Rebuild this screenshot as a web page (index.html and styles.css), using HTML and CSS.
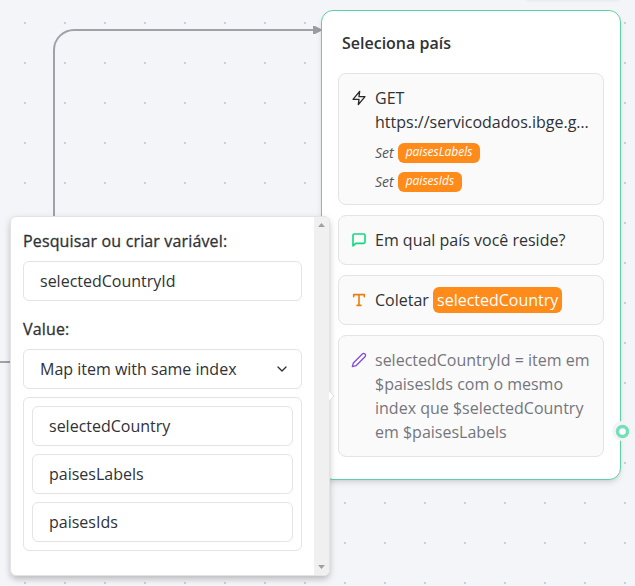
FILE: index.html
```html
<!DOCTYPE html>
<html lang="pt-BR">
<head>
<meta charset="utf-8">
<title>Seleciona país</title>
<link rel="stylesheet" href="styles.css">
</head>
<body>
<main class="canvas">
  <svg class="edges" width="635" height="586" viewBox="0 0 635 586">
    <path class="edge" d="M0 362H20M54 230V50a20 20 0 0 1 20-20H315"/>
    <path class="arrow" d="M313 26h2l6 3v2l-6 3h-2z"/>
  </svg>
  <div class="toolbar-shadow"></div>

  <section class="group">
    <h2 class="group-title">Seleciona país</h2>
    <article class="block block-request">
      <svg class="icon" viewBox="0 0 24 24"><polygon points="13 2 3 14 12 14 11 22 21 10 12 10 13 2"/></svg>
      <div class="block-body">
        <p class="request">GET<br>https://servicodados.ibge.g…</p>
        <p class="set"><em>Set</em><span class="tag">paisesLabels</span></p>
        <p class="set"><em>Set</em><span class="tag">paisesIds</span></p>
      </div>
    </article>
    <article class="block">
      <svg class="icon icon-bubble" viewBox="0 0 24 24"><path d="M21 15a2 2 0 0 1-2 2H7l-4 4V5a2 2 0 0 1 2-2h14a2 2 0 0 1 2 2z"/></svg>
      <p class="block-body">Em qual país você reside?</p>
    </article>
    <article class="block">
      <svg class="icon icon-input" viewBox="0 0 24 24"><path d="M4 7V4h16v3M9 20h6M12 4v16"/></svg>
      <p class="block-body">Coletar <span class="variable">selectedCountry</span></p>
    </article>
    <article class="block">
      <svg class="icon icon-logic" viewBox="0 0 24 24"><path d="M17 3a2.828 2.828 0 1 1 4 4L7.500 20.500 2 22l1.500-5.500L17 3z"/></svg>
      <p class="block-body muted">selectedCountryId = item em $paisesIds com o mesmo index que $selectedCountry em $paisesLabels</p>
    </article>
    <svg class="endpoint" viewBox="0 0 20 20"><circle class="halo" cx="10" cy="10" r="10"/><circle class="ring" cx="10.500" cy="10.500" r="5"/></svg>
  </section>

  <aside class="popover">
    <form class="form">
      <div class="label">Pesquisar ou criar variável:</div>
      <div class="field">selectedCountryId</div>
      <div class="label label-value">Value:</div>
      <div class="field select">Map item with same index
        <svg class="chevron" viewBox="0 0 24 24"><polyline points="6 9 12 15 18 9"/></svg>
      </div>
      <div class="list">
        <div class="field">selectedCountry</div>
        <div class="field">paisesLabels</div>
        <div class="field">paisesIds</div>
      </div>
    </form>
    <div class="scrollbar">
      <svg width="7" height="4" viewBox="0 0 7 4"><path d="M0 4L3.500 0 7 4z"/></svg>
      <svg width="7" height="4" viewBox="0 0 7 4"><path d="M0 0L3.500 4 7 0z"/></svg>
    </div>
    <svg class="pointer" viewBox="0 0 6 12"><path d="M0 .5L5 6 0 11.500"/></svg>
  </aside>
</main>
</body>
</html>
```
FILE: styles.css
```css
* {
  box-sizing: border-box;
}

body {
  margin: 0;
  color: #303235;
  font: 16px/24px "Open Sans", "Noto Sans", sans-serif;
}

p,
h2 {
  margin: 0;
}

.canvas {
  position: relative;
  width: 635px;
  height: 586px;
  overflow: hidden;
  background: #f4f5f8 conic-gradient(from 90deg at 38px 38px, #c6d0e1 25%, transparent 0) -14px -16px / 40px 40px;
}

.edges {
  position: absolute;
  inset: 0;
}

.edge {
  fill: none;
  stroke: #a0a2a8;
  stroke-width: 2;
}

.arrow {
  fill: #9a9ca1;
}

.toolbar-shadow {
  position: absolute;
  top: -10px;
  left: 524px;
  width: 98px;
  height: 10px;
  border-radius: 6px;
  box-shadow: 0 1px 3px rgb(0 0 0 / 6%);
}

.group {
  position: absolute;
  top: 10px;
  left: 321px;
  display: flex;
  flex-direction: column;
  gap: 10px;
  width: 300px;
  height: 470px;
  padding: 20px 16px;
  border: 1px solid #5fcfa5;
  border-radius: 12px;
  background: #fff;
  box-shadow: 0 4px 6px -1px rgb(0 0 0 / 10%), 0 2px 4px -2px rgb(0 0 0 / 10%);
}

.group-title {
  margin-bottom: 8px;
  padding-left: 4px;
  font-size: 16px;
  font-weight: 600;
  line-height: 24px;
}

.block {
  display: flex;
  gap: 8px;
  width: 266px;
  padding: 12px;
  border: 1px solid #e4e4e7;
  border-radius: 8px;
  background: #fafafa;
}

.block-request {
  height: 132px;
}

.icon {
  flex: none;
  width: 16px;
  height: 16px;
  margin-top: 4px;
  fill: none;
  stroke: #27282b;
  stroke-width: 2;
  stroke-linecap: round;
  stroke-linejoin: round;
}

.icon-bubble {
  stroke: #14d880;
  stroke-width: 2.4;
}

.icon-input {
  stroke: #e87d12;
  stroke-width: 2.4;
}

.icon-logic {
  stroke: #8250d8;
}

.block-body {
  flex: 1;
  min-width: 0;
}

.request {
  white-space: nowrap;
}

.muted {
  color: #75767d;
}

.set {
  display: flex;
  align-items: center;
  gap: 4px;
  height: 20px;
  margin-top: 9px;
  color: #55565c;
  font-size: 14px;
  line-height: 20px;
}

.tag {
  height: 20px;
  padding: 0 8px;
  border-radius: 6px;
  background: #ff8b1a;
  color: #fff;
  font-size: 12px;
  font-style: italic;
  line-height: 17px;
}

.variable {
  padding: 2px 4px;
  border-radius: 6px;
  background: #ff8b1a;
  color: #fff;
}

.endpoint {
  position: absolute;
  top: 410px;
  right: -12px;
  width: 20px;
  height: 20px;
}

.halo {
  fill: #f3f4f5;
}

.ring {
  fill: #fff;
  stroke: #74dfb8;
  stroke-width: 3.5;
}

.popover {
  position: absolute;
  top: 216px;
  left: 10px;
  display: flex;
  width: 320px;
  height: 360px;
  border: 1px solid #e2e3e5;
  border-radius: 6px;
  background: #fff;
  box-shadow: 0 4px 6px -1px rgb(0 0 0 / 18%), 0 2px 10px rgb(0 0 0 / 9%);
}

.form {
  flex: 1;
  padding: 12px;
}

.label {
  margin-bottom: 8px;
  letter-spacing: 0.15px;
  -webkit-text-stroke: 0.3px currentColor;
}

.label-value {
  margin-top: 16px;
}

.field {
  height: 40px;
  padding: 7px 16px;
  border: 1px solid #e4e4e7;
  border-radius: 6px;
}

.select {
  display: flex;
  align-items: center;
  justify-content: space-between;
  padding-right: 11px;
}

.chevron {
  width: 16px;
  height: 16px;
  fill: none;
  stroke: #303235;
  stroke-width: 2;
  stroke-linecap: round;
  stroke-linejoin: round;
}

.list {
  display: flex;
  flex-direction: column;
  gap: 8px;
  margin-top: 8px;
  padding: 8px;
  border: 1px solid #e4e4e7;
  border-radius: 6px;
}

.scrollbar {
  display: flex;
  flex-direction: column;
  align-items: center;
  justify-content: space-between;
  width: 15px;
  padding: 6px 0;
  border-radius: 0 5px 5px 0;
  background: #f0f0f0;
  fill: #a0a0a0;
}

.pointer {
  position: absolute;
  top: 173px;
  right: -6px;
  width: 6px;
  height: 12px;
  fill: #fff;
  stroke: #dedfe2;
  stroke-width: 1;
}
```
